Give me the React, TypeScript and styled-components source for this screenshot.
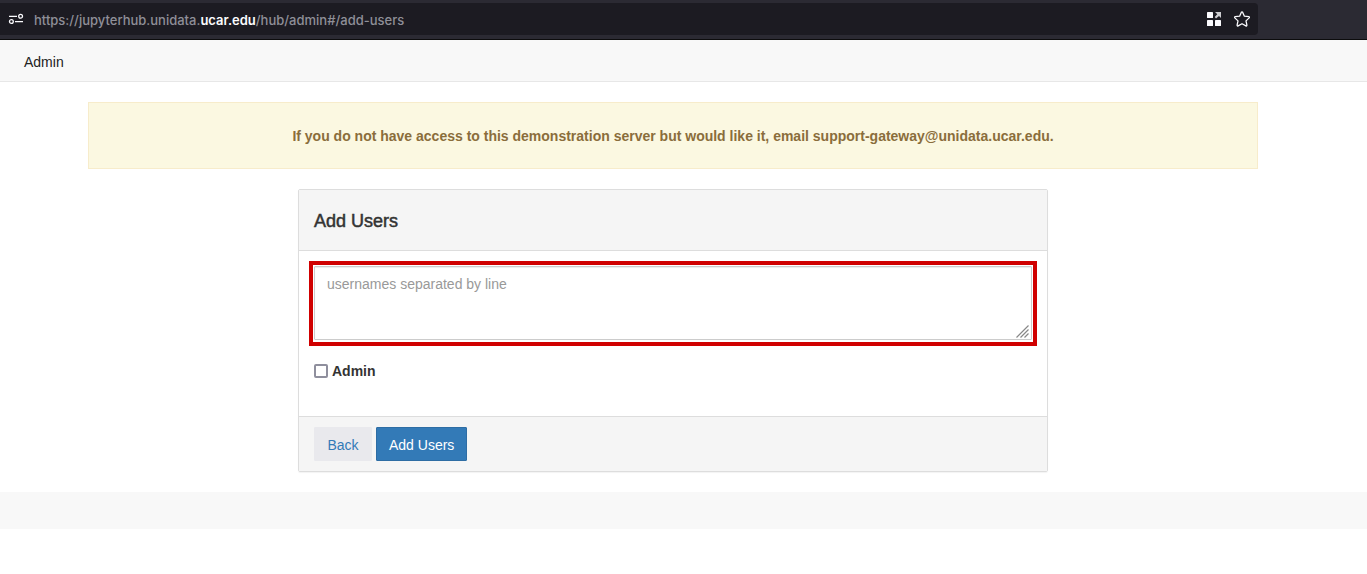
import React, { useState } from "react";
import styled, { createGlobalStyle } from "styled-components";

const GlobalStyle = createGlobalStyle`
  *, *::before, *::after { box-sizing: border-box; }
  body {
    margin: 0;
    background: #fff;
    color: #333;
    font-family: "Liberation Sans", Arial, sans-serif;
    font-size: 14px;
    line-height: 20px;
  }
`;

const BrowserBar = styled.header`
  padding: 3px 109px 4px 0;
  background: #2b2a33;
  border-bottom: 1px solid #0c0c0d;
`;

const AddressField = styled.div`
  display: flex;
  align-items: center;
  height: 32px;
  padding: 0 8px;
  background: #1c1b22;
  border-radius: 0 4px 4px 0;
  font-family: Inter, sans-serif;
`;

const ToolButton = styled.button`
  display: flex;
  padding: 0;
  border: 0;
  background: none;
  color: #fbfbfe;
`;

const Url = styled.div`
  flex: 1;
  padding: 2px 0 0 10px;
  font-size: 13px;
  font-weight: 500;
  color: #8f8f98;
  white-space: nowrap;
`;

const Domain = styled.span`
  color: #fbfbfe;
  font-weight: 600;
`;

const Tools = styled.div`
  display: flex;
  gap: 12px;
`;

const NavBar = styled.nav`
  padding: 12px 24px 9px;
  background: #f8f8f8;
  border-bottom: 1px solid #e7e7e7;
`;

const NavLink = styled.a`
  color: #222;
  text-decoration: none;
`;

const Page = styled.main`
  padding: 20px 109px 20px 88px;
`;

const Announcement = styled.div`
  padding: 23px 15px 22px;
  background: #fbf8e1;
  border: 1px solid #f7eccb;
  color: #8a6d3b;
  font-weight: bold;
  text-align: center;
`;

const Panel = styled.form`
  max-width: 750px;
  margin: 20px auto 0;
  border: 1px solid #ddd;
  border-radius: 2px;
  box-shadow: 0 1px 1px rgba(0, 0, 0, 0.05);
`;

const PanelHeading = styled.div`
  padding: 21px 15px 19px;
  background: #f5f5f5;
  border-bottom: 1px solid #ddd;
`;

const PanelTitle = styled.h1`
  margin: 0;
  font-size: 18px;
  font-weight: 500;
  line-height: 20px;
  -webkit-text-stroke: 0.5px currentColor;
`;

const PanelBody = styled.div`
  padding: 10px 10px 35px;
`;

const Highlight = styled.div`
  position: relative;
  padding: 1px 1px 2px;
  border: 4px solid #d00000;
`;

const UserNames = styled.textarea`
  display: block;
  width: 100%;
  height: 74px;
  padding: 7px 12px;
  border: 1px solid #ccc;
  border-radius: 1px;
  background: #fff;
  box-shadow: inset 0 1px 1px rgba(0, 0, 0, 0.075);
  color: #555;
  font: inherit;
  resize: vertical;
  outline: 0;
  &::placeholder { color: #999; opacity: 1; }
  &::-webkit-resizer { background: transparent; }
`;

const Grip = styled.svg`
  position: absolute;
  right: 3px;
  bottom: 4px;
  pointer-events: none;
`;

const CheckLabel = styled.label`
  display: flex;
  align-items: center;
  gap: 4px;
  width: fit-content;
  margin: 15px 5px 0;
  font-weight: bold;
`;

const CheckBox = styled.input`
  appearance: none;
  width: 14px;
  height: 14px;
  margin: 0;
  border: 2px solid #8f8f9d;
  border-radius: 2px;
  background: #fff;
  &:checked { background: #337ab7; }
`;

const PanelFooter = styled.div`
  display: flex;
  gap: 4px;
  padding: 10px 15px;
  background: #f5f5f5;
  border-top: 1px solid #ddd;
`;

const Button = styled.button<{ $primary?: boolean }>`
  min-width: 58px;
  height: 34px;
  padding: 2px 12px 0;
  border: 1px solid ${(p) => (p.$primary ? "#2e6da4" : "#e9e9ed")};
  border-radius: 1px;
  background: ${(p) => (p.$primary ? "#337ab7" : "#e9e9ed")};
  color: ${(p) => (p.$primary ? "#fff" : "#337ab7")};
  font: inherit;
  cursor: pointer;
`;

const BottomStrip = styled.footer`
  height: 37px;
  background: #f8f8f8;
`;

const PermissionsIcon = () => (
  <svg width="16" height="16" viewBox="0 0 16 16" fill="none" stroke="currentColor" strokeWidth="1.3" aria-hidden="true">
    <path d="M1 5.4h8M7 10.6h8" />
    <circle cx="12.6" cy="5.3" r="1.9" />
    <circle cx="3.4" cy="10.5" r="1.9" />
  </svg>
);

const ExtensionsIcon = () => (
  <svg width="16" height="16" viewBox="0 0 16 16" fill="currentColor" aria-hidden="true">
    <rect x="1" y="1" width="6" height="6" rx=".6" />
    <rect x="1" y="9" width="6" height="6" rx=".6" />
    <rect x="9" y="9" width="6" height="6" rx=".6" />
    <path d="M9 1h6v6l-2-2-3 2.5L8.7 6l2.6-2.8z" opacity=".8" />
  </svg>
);

const StarIcon = () => (
  <svg width="16" height="16" viewBox="0 0 16 16" fill="none" stroke="currentColor" strokeWidth="1.3" strokeLinejoin="round" aria-hidden="true">
    <path d="M7.4 1.2a.7.7 0 0 1 1.2 0l1.8 4 4.4.5c.6.1.8.8.4 1.2l-3.2 3 .9 4.3c.1.6-.5 1-1 .7L8 12.700l-3.900 2.200c-.5.3-1.100-.1-1-.7l.9-4.300-3.200-3c-.4-.4-.2-1.100.4-1.200l4.400-.5z" />
  </svg>
);

const ResizeGrip = () => (
  <Grip width="14" height="14" viewBox="0 0 14 14" aria-hidden="true">
    <rect width="14" height="14" fill="#fff" />
    <path d="M.5 13.500l12-12M4.500 13.500l8-8M8.500 13.500l4-4" stroke="#888" strokeWidth="1.200" fill="none" />
  </Grip>
);

export default function App() {
  const [names, setNames] = useState("");
  const [admin, setAdmin] = useState(false);

  return (
    <>
      <GlobalStyle />
      <BrowserBar>
        <AddressField>
          <ToolButton type="button" aria-label="Site permissions"><PermissionsIcon /></ToolButton>
          <Url>https://jupyterhub.unidata.<Domain>ucar.edu</Domain>/hub/admin#/add-users</Url>
          <Tools>
            <ToolButton type="button" aria-label="Extensions"><ExtensionsIcon /></ToolButton>
            <ToolButton type="button" aria-label="Bookmark this page"><StarIcon /></ToolButton>
          </Tools>
        </AddressField>
      </BrowserBar>
      <NavBar>
        <NavLink href="#/">Admin</NavLink>
      </NavBar>
      <Page>
        <Announcement>
          If you do not have access to this demonstration server but would like it, email support-gateway@unidata.ucar.edu.
        </Announcement>
        <Panel onSubmit={(e) => e.preventDefault()}>
          <PanelHeading>
            <PanelTitle>Add Users</PanelTitle>
          </PanelHeading>
          <PanelBody>
            <Highlight>
              <UserNames
                aria-label="Usernames"
                placeholder="usernames separated by line"
                value={names}
                onChange={(e) => setNames(e.target.value)}
              />
              <ResizeGrip />
            </Highlight>
            <CheckLabel>
              <CheckBox type="checkbox" checked={admin} onChange={(e) => setAdmin(e.target.checked)} />
              Admin
            </CheckLabel>
          </PanelBody>
          <PanelFooter>
            <Button type="button">Back</Button>
            <Button type="submit" $primary>Add Users</Button>
          </PanelFooter>
        </Panel>
      </Page>
      <BottomStrip />
    </>
  );
}
